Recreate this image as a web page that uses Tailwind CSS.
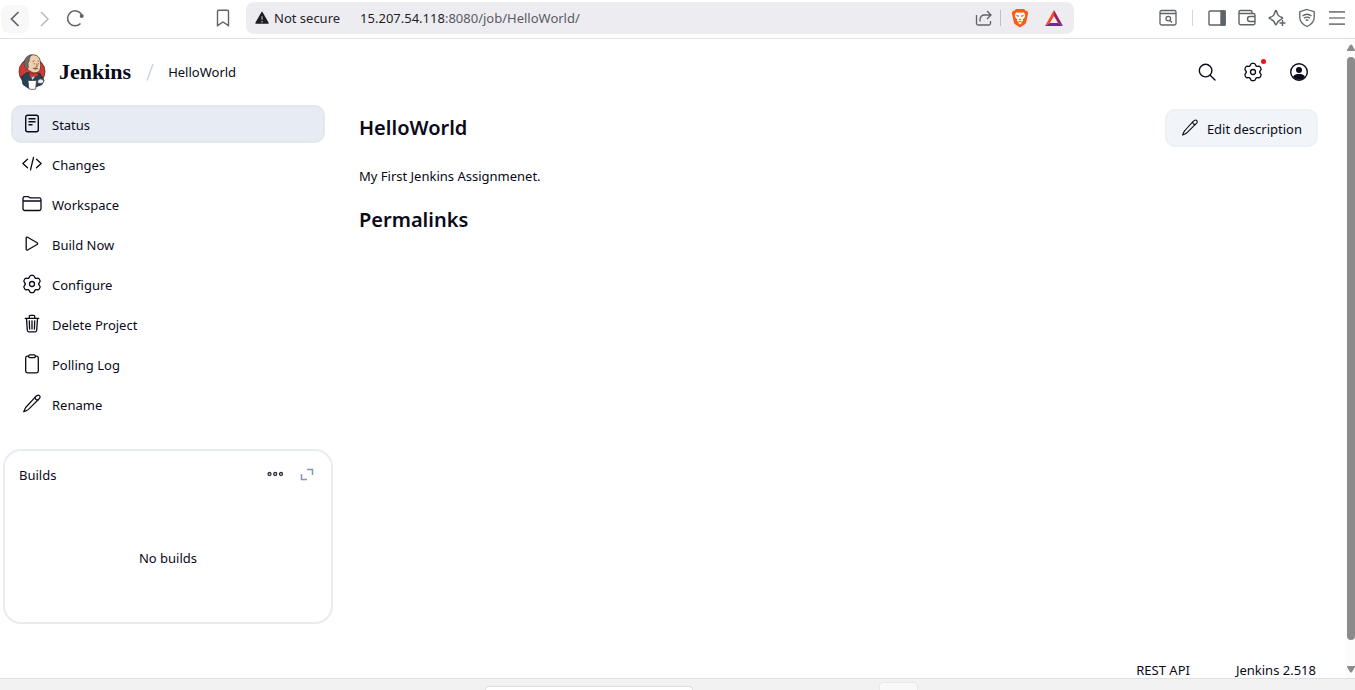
<!DOCTYPE html>
<html lang="en">
<head>
<meta charset="utf-8">
<meta name="viewport" content="width=device-width, initial-scale=1">
<title>HelloWorld [Jenkins]</title>
<script src="https://cdn.jsdelivr.net/npm/@tailwindcss/browser@4"></script>
</head>
<body class="flex min-h-screen flex-col bg-white font-['Noto_Sans','Open_Sans',sans-serif] text-[13px] leading-5 text-[#0a0a18]">

<svg class="hidden" aria-hidden="true">
  <symbol id="gear" viewBox="0 0 20 20"><g fill="none" stroke="currentColor" stroke-width="1.300" stroke-linecap="round" stroke-linejoin="round"><circle cx="10" cy="10" r="2.500"/><path id="lobe" d="M6.600 4.100C7.700 3.900 7.500 1.300 9 1.300h2C12.500 1.300 12.300 3.900 13.400 4.100"/><use href="#lobe" transform="rotate(60 10 10)"/><use href="#lobe" transform="rotate(120 10 10)"/><use href="#lobe" transform="rotate(180 10 10)"/><use href="#lobe" transform="rotate(240 10 10)"/><use href="#lobe" transform="rotate(300 10 10)"/></g></symbol>
  <symbol id="pencil" viewBox="0 0 20 20"><g fill="none" stroke="currentColor" stroke-width="1.200" stroke-linecap="round" stroke-linejoin="round"><path d="M13 3.300 14.700 1.800c1-.8 2.100-.8 2.800-.1s.7 1.800-.1 2.800L7 14.900c-.8.8-1.600 1.300-2.600 1.700l-2.700 1.200 1.200-2.700c.4-1 .9-1.800 1.700-2.600z"/><path d="M13 3.300c0 1.800 1.100 2.900 2.900 2.900"/></g></symbol>
</svg>

<!-- Browser toolbar -->
<div class="flex h-[39px] shrink-0 items-start border-b border-[#e1e1e3] text-[#5f6368]">
  <div class="flex h-9 w-[246px] shrink-0 items-center">
    <button aria-label="Back" class="ml-px mt-px grid size-7 place-items-center rounded-lg bg-[#f8f8f9]"><svg class="size-5" viewBox="0 0 20 20" fill="none" stroke="currentColor" stroke-width="1.700"><path d="M13.500 3 6.500 10l7 7"/></svg></button>
    <button aria-label="Forward" class="mt-px grid size-7 place-items-center text-[#b9babd]"><svg class="size-5" viewBox="0 0 20 20" fill="none" stroke="currentColor" stroke-width="1.500"><path d="m8 3 7 7-7 7"/></svg></button>
    <button aria-label="Reload" class="ml-1 grid size-7 place-items-center"><svg class="size-5" viewBox="0 0 20 20" fill="none" stroke="currentColor" stroke-width="1.500"><path d="M15.500 15.500A7.500 7.500 0 1 1 16.500 6.500"/><circle cx="16.700" cy="8" r="2" fill="currentColor" stroke="none"/></svg></button>
    <button aria-label="Bookmark this page" class="ml-auto mr-[13px] grid size-5 place-items-center"><svg class="size-5" viewBox="0 0 20 20" fill="none" stroke="currentColor" stroke-width="1.400"><path d="M4.500 3.500c0-.8.6-1.300 1.300-1.300h8.400c.8 0 1.300.6 1.300 1.300v14.200L10 14l-5.500 3.700z"/></svg></button>
  </div>
  <div class="mt-0.5 flex h-8 max-w-[828px] flex-1 items-center rounded-lg bg-[#ededf1] pl-2">
    <button class="flex items-center gap-1 text-[#242429]"><svg class="size-4" viewBox="0 0 16 16"><path d="M8 2.500 14 13H2z" fill="#1e1e22" stroke="#1e1e22" stroke-width="1.500" stroke-linejoin="round"/><path d="M8 6.200v3.600M8 11v1.400" stroke="#aaaaae" stroke-width="1.300"/></svg>Not secure</button>
    <div class="ml-5 min-w-0 flex-1 truncate text-[#5a5a62]"><span class="text-[#1f1f24]">15.207.54.118</span>:8080/job/HelloWorld/</div>
    <button aria-label="Share"><svg class="size-[18px]" viewBox="0 0 18 18" fill="none" stroke="currentColor" stroke-width="1.300"><path d="M1.500 6v8.500c0 .9.600 1.500 1.500 1.500h11c.9 0 1.500-.6 1.500-1.500V12"/><path d="M5 12.500V11c0-3.500 2-5 5-5h6M12 2l4 4-4 4"/></svg></button>
    <span class="ml-[7px] h-4 w-px bg-[#bfbfc5]"></span>
    <button aria-label="Brave Shields" class="ml-[9px]"><svg class="size-5" viewBox="0 0 20 20"><path d="M6 1h8l1.500 1.700 1.700.1 1 2.700-.6 2-1.500 7.100c-.2.800-.6 1.300-1.200 1.700L10 19.500l-4.900-3.200c-.6-.4-1-.9-1.200-1.700L2.400 7.500l-.6-2 1-2.700 1.700-.1z" fill="#fb5a12"/><path d="m6.500 4.200 1.900.5L10 4.500l1.600.2 1.900-.5 1.700 2.400-.4 1.200.2 1.200-2.300 2.600.3 1.300-1.200.8-1-.6-.8-.2-.8.2-1 .6-1.200-.8.300-1.300L5 9l.2-1.200-.4-1.200zM8 14.800l2-1.100 2 1.100-2 1.600z" fill="#fff"/><path d="m6.300 7.200 2.700.7-.8.900zm7.400 0-2.700.7.800.9zM9 11h2l-1 1.200z" fill="#fb5a12" stroke="#fb5a12" stroke-width=".6"/></svg></button>
    <button aria-label="Brave Rewards" class="ml-[15px] mr-[11px]"><svg class="size-[18px]" viewBox="0 0 18 18"><path d="M9 1 0 17l5-3 4-7z" fill="#ff4724"/><path d="m9 1 9 16-5-3-4-7z" fill="#9e1f63"/><path d="M0 17h18l-5-3H5z" fill="#662d91"/></svg></button>
  </div>
  <div class="ml-auto flex h-9 shrink-0 items-center gap-2.5 pl-4 pr-2">
    <button aria-label="Search tabs"><svg class="size-5" viewBox="0 0 20 20" fill="none" stroke="currentColor" stroke-width="1.300"><rect x="2" y="2.500" width="16" height="14.500" rx="1.500"/><path d="M2 5.500h16M12 12.500l2 2"/><circle cx="10.300" cy="10.600" r="2.300"/></svg></button>
    <span class="mx-1 h-4 w-px bg-[#d5d5da]"></span>
    <button aria-label="Sidebar"><svg class="size-5" viewBox="0 0 20 20" fill="none" stroke="currentColor" stroke-width="1.400"><rect x="2" y="3" width="16" height="14" rx="1"/><path d="M14 3h4v14h-4z" fill="currentColor"/></svg></button>
    <button aria-label="Wallet"><svg class="size-5" viewBox="0 0 20 20" fill="none" stroke="currentColor" stroke-width="1.400"><path d="M15 5.500V4c0-1-.5-1.500-1.500-1.500h-10C2.500 2.500 2 3 2 4v11c0 1 .7 1.700 1.700 1.700h12.600c1 0 1.700-.7 1.700-1.700V7.200c0-1-.7-1.700-1.700-1.700H2"/><path d="M18 8.500h-5a2.500 2.500 0 0 0 0 5h5"/></svg></button>
    <button aria-label="Leo AI"><svg class="size-5" viewBox="0 0 20 20" fill="none" stroke="currentColor" stroke-width="1.400" stroke-linejoin="round"><path d="M12.500 12.500c-1.500.700-2.200 1.500-3 3.700-.3.900-.9.900-1.200 0-1-3.200-2-4.200-5.500-5.500-.8-.3-.8-.9 0-1.200 3.500-1.300 4.500-2.300 5.500-6.500.3-.9.900-.9 1.200 0 1 4.200 2 5.200 5.500 6.500.8.300.8.900 0 1.200z"/><path d="M15.500 12v6M12.500 15h6"/></svg></button>
    <button aria-label="VPN"><svg class="size-5" viewBox="0 0 20 20" fill="none" stroke="currentColor" stroke-width="1.300"><path d="m10 1.500 7.200 2.200v5.800c0 4-2.700 7-7.200 9-4.500-2-7.200-5-7.200-9V3.700z"/><path d="M5.500 8c2.800-2.200 6.200-2.200 9 0M7 10.300c2-1.500 4-1.500 6 0M8.600 12.400c1-.6 1.800-.6 2.800 0"/></svg></button>
    <button aria-label="Menu"><svg class="size-5" viewBox="0 0 20 20" stroke="#7c7f84" stroke-width="1.700"><path d="M2 3.800h16M2 10h16M2 16.200h16"/></svg></button>
  </div>
</div>

<!-- Page viewport -->
<div class="flex flex-1">
  <div class="flex min-w-0 flex-1 flex-col">
    <header class="flex h-[66px] items-center pl-[18px] pr-[36px]">
      <a href="#" class="flex items-center gap-[13px]">
        <svg class="h-9 w-7" viewBox="0 0 28 36" role="img" aria-label="Jenkins logo">
          <ellipse cx="14" cy="17.500" rx="13" ry="13.200" fill="#d33833" stroke="#5e2626" stroke-width=".8"/>
          <path d="M3.500 22.500 9 18.500l7 2 5.500-1.500 3 4.500 1.500 3-2 4-5 2-9 1.500-5-3.500z" fill="#234457" stroke="#1b2b36" stroke-width=".8"/>
          <path d="M11.500 19.500 14.500 26l4-5.500z" fill="#c9d3da"/>
          <path d="M7.500 11C7 5 10 1 15 .8c4.500 0 7 3 7.400 7.200.3 3.500.6 6-.8 8.500-1.500 2.500-5.500 3-8 1.500C10.500 16.500 8.500 15 7.500 11z" fill="#efcfae" stroke="#473b34" stroke-width=".8"/>
          <path d="M6.300 11.500C5.500 6 8 1.600 13.500.8 12 2.700 11 5 11.200 7l-1.200 2.500.4 4-1.500 2C7.200 14 6.600 13 6.300 11.500z" fill="#6d6a68" stroke="#3f3a38" stroke-width=".6"/>
          <path d="m14.500 7.500 2-.7M19.500 7l1.500.3M15.500 9.800h1.200M19.800 9.800H21M18.500 9.500l.9 2.800h-1.600" fill="none" stroke="#6b5546" stroke-width=".8"/>
          <path d="M14.500 14.300c2-1.200 4.300-1 5.800.1-1.500 1.300-4.100 1.400-5.800-.1z" fill="#765b4a"/>
          <path d="m11.500 18.500 4 1.300 4.500-1-.3 4.200-4-.9-4 1.400z" fill="#d33833" stroke="#7b1d1d" stroke-width=".6"/>
          <path d="M10 26.500h8.500l-.8 8.300c-1.700.8-5.200.8-6.900 0z" fill="#fff" stroke="#444" stroke-width=".8"/>
          <path d="M20 26.500c2-2.500 5-1.500 5.500.5.300 1.500-1 2.500-2.500 2.500l-3.500-.5z" fill="#f4f0ec" stroke="#444" stroke-width=".7"/>
        </svg>
        <span class="font-['Liberation_Serif',serif] text-[22px] font-bold leading-7">Jenkins</span>
      </a>
      <svg class="ml-[15px] h-5 w-2" viewBox="0 0 8 20" stroke="#ccd5e0" stroke-width="1.500" aria-hidden="true"><path d="M7 2 1 18.500"/></svg>
      <a href="#" class="ml-3.5">HelloWorld</a>
      <div class="ml-auto flex items-center gap-[26px]">
        <button aria-label="Search"><svg class="size-5" viewBox="0 0 20 20" fill="none" stroke="currentColor" stroke-width="1.400" stroke-linecap="round"><circle cx="8.600" cy="8.600" r="6.300"/><path d="m13.200 13.200 4.800 4.800"/></svg></button>
        <button aria-label="Manage Jenkins" class="relative"><svg class="size-5"><use href="#gear"/></svg><span class="absolute -right-[3px] -top-[3px] size-[5px] rounded-full bg-[#f01414]"></span></button>
        <button aria-label="Account"><svg class="size-5" viewBox="0 0 20 20"><circle cx="10" cy="10" r="8.300" fill="none" stroke="currentColor" stroke-width="1.400"/><circle cx="10" cy="8" r="3" fill="currentColor"/><path d="M4 14.500c1.500-2 3.500-2.500 6-2.500s4.500.5 6 2.500c-3 4.300-9 4.300-12 0z" fill="currentColor"/></svg></button>
      </div>
    </header>

    <div class="flex flex-1">
      <aside class="w-[333px] shrink-0 pl-[3px]">
        <nav class="flex flex-col gap-0.5 px-2">
          <a href="#" aria-current="page" class="flex h-[38px] items-center gap-2.5 rounded-[10px] border-2 border-[#e3e8ef] bg-[#e7ebf2] pl-[9px]"><svg class="size-5" viewBox="0 0 20 20" fill="none" stroke="currentColor" stroke-width="1.400"><rect x="3.700" y="1.200" width="12.600" height="16.600" rx="2"/><path d="M6.500 4.800h7M6.500 7.800h7M6.500 10.800h4"/></svg><span class="pt-0.5">Status</span></a>
          <a href="#" class="flex h-[38px] items-center gap-2.5 pl-[11px]"><svg class="size-5" viewBox="0 0 20 20" fill="none" stroke="currentColor" stroke-width="1.300" stroke-linecap="round" stroke-linejoin="round"><path d="M5.500 5.200.9 9.500l4.600 4.300M14.500 5.200l4.600 4.300-4.600 4.300M11.500 3.500l-3 12.300"/></svg><span class="pt-0.5">Changes</span></a>
          <a href="#" class="flex h-[38px] items-center gap-2.5 pl-[11px]"><svg class="size-5" viewBox="0 0 20 20" fill="none" stroke="currentColor" stroke-width="1.300" stroke-linejoin="round"><path d="M1 14.700V4.500c0-1 .7-1.800 1.800-1.800h3.500l2 1.200h8.900c1 0 1.800.8 1.800 1.800v9c0 1-.8 1.800-1.800 1.800H2.800c-1 0-1.800-.8-1.800-1.800zM1 7h18"/></svg><span class="pt-0.5">Workspace</span></a>
          <a href="#" class="flex h-[38px] items-center gap-2.5 pl-[11px]"><svg class="size-5" viewBox="0 0 20 20" fill="none" stroke="currentColor" stroke-width="1.300" stroke-linejoin="round"><path d="M4.200 4v11.200c0 .8.700 1.200 1.400.8l9.500-5.500c.7-.4.700-1.300 0-1.700L5.600 3.200c-.7-.4-1.400 0-1.400.8z"/></svg><span class="pt-0.5">Build Now</span></a>
          <a href="#" class="flex h-[38px] items-center gap-2.5 pl-[11px]"><svg class="size-5"><use href="#gear"/></svg><span class="pt-0.5">Configure</span></a>
          <a href="#" class="flex h-[38px] items-center gap-2.5 pl-[11px]"><svg class="size-5" viewBox="0 0 20 20" fill="none" stroke="currentColor" stroke-width="1.300" stroke-linecap="round" stroke-linejoin="round"><path d="M3.200 4.300h13.600M4.500 4.500l.8 11.800c.1.900.6 1.500 1.500 1.500h6.400c.9 0 1.400-.6 1.500-1.500l.8-11.800M7.300 4V2.300c0-.6.300-1 1-1h3.400c.7 0 1 .4 1 1V4M7.300 7l.3 8M10 7v8M12.700 7l-.3 8"/></svg><span class="pt-0.5">Delete Project</span></a>
          <a href="#" class="flex h-[38px] items-center gap-2.5 pl-[11px]"><svg class="size-5" viewBox="0 0 20 20" fill="none" stroke="currentColor" stroke-width="1.300" stroke-linejoin="round"><path d="M6.700 2.200H5.500c-1 0-1.800.8-1.800 1.800v13c0 1 .8 1.800 1.800 1.800h9c1 0 1.800-.8 1.800-1.800V4c0-1-.8-1.800-1.800-1.800h-1.200"/><rect x="6.700" y=".8" width="6.600" height="2.800" rx="1.200"/></svg><span class="pt-0.5">Polling Log</span></a>
          <a href="#" class="flex h-[38px] items-center gap-2.5 pl-[11px]"><svg class="size-5"><use href="#pencil"/></svg><span class="pt-0.5">Rename</span></a>
        </nav>
        <section class="mt-[26px] flex h-[175px] flex-col rounded-[18px] border-2 border-[#e7ebf2] px-3.5">
          <div class="flex items-center pt-3.5">
            <h2>Builds</h2>
            <button aria-label="More actions" class="ml-auto"><svg class="h-4 w-[18px]" viewBox="0 0 18 16" fill="none" stroke="#2c2c3a" stroke-width="1.300"><circle cx="3.500" cy="7" r="1.500"/><circle cx="9.200" cy="7" r="1.500"/><circle cx="15" cy="7" r="1.500"/></svg></button>
            <button aria-label="Expand" class="ml-[13px] grid size-5 place-items-center"><svg class="size-3.5" viewBox="0 0 14 14" fill="none" stroke="#7f97b8" stroke-width="1.500"><path d="M7 1.500h5.500V7M1.500 6v5.500H7"/></svg></button>
          </div>
          <p class="flex flex-1 items-center justify-center pt-2">No builds</p>
        </section>
      </aside>

      <main class="min-w-0 flex-1 pl-[26px] pr-[27px] pt-1">
        <div class="flex items-center justify-between">
          <h1 class="text-[20px] font-semibold leading-7">HelloWorld</h1>
          <button class="flex h-[38px] items-center gap-2 rounded-[10px] border-2 border-[#ecf1f5] bg-[#f1f5f9] px-3.5"><svg class="size-[18px]"><use href="#pencil"/></svg><span class="pt-0.5">Edit description</span></button>
        </div>
        <p class="mt-[19px]">My First Jenkins Assignmenet.</p>
        <h2 class="mt-5 text-[20px] font-semibold leading-7">Permalinks</h2>
      </main>
    </div>

    <footer class="flex justify-end gap-[46px] pr-[29px]">
      <a href="#" class="h-[18px]">REST API</a>
      <a href="#" class="h-[18px]">Jenkins 2.518</a>
    </footer>
  </div>

  <!-- Vertical scrollbar -->
  <div class="flex w-2.5 shrink-0 flex-col items-end bg-[#fcfcfc]">
    <svg class="mt-1 h-2.5 w-2" viewBox="0 0 8 10" fill="#8b8b8b"><path d="M0 8V7l3-5q1-1 2 0l3 5v1z"/></svg>
    <div class="mb-6 mt-1 w-2 flex-1 rounded-[4px] bg-[#8b8b8b]"></div>
    <svg class="mb-1 h-2.5 w-2" viewBox="0 0 8 10" fill="#8b8b8b"><path d="M0 2h8v1L5 8q-1 1-2 0L0 3z"/></svg>
  </div>
</div>

<!-- Top edge of the desktop taskbar -->
<div class="flex h-3 shrink-0 items-end overflow-hidden border-t border-[#e0e0e0] bg-[#f2f2f2]">
  <div class="ml-[485px] h-1 w-[208px] rounded-t-full border-x border-t border-[#dedede] bg-white"></div>
  <div class="ml-[186px] h-2 w-[39px] rounded-t border-x border-t border-[#e8e8e8] bg-[#f9f9f9]"></div>
</div>
</body>
</html>
